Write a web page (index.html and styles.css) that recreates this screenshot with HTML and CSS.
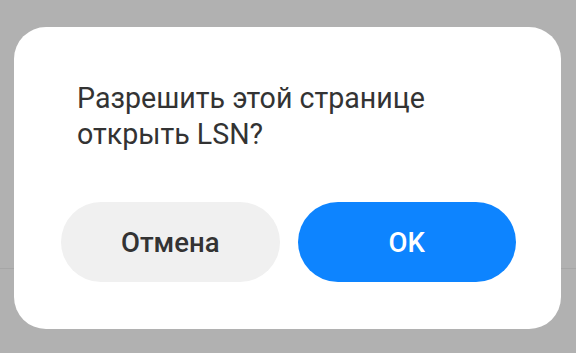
FILE: index.html
```html
<!DOCTYPE html>
<html lang="ru">
<head>
<meta charset="utf-8">
<link rel="stylesheet" href="styles.css">
</head>
<body>
<div class="dialog">
  <p class="message">Разрешить этой странице<br>открыть LSN?</p>
  <div class="actions">
    <button class="btn btn-cancel">Отмена</button>
    <button class="btn btn-ok">OK</button>
  </div>
</div>
</body>
</html>
```
FILE: styles.css
```css
html, body {
  margin: 0;
  padding: 0;
}
body {
  width: 576px;
  height: 353px;
  overflow: hidden;
  background: linear-gradient(to bottom, #b1b1b1 0, #b1b1b1 268px, #a6a6a6 268px, #a6a6a6 269px, #b1b1b1 269px);
  font-family: Roboto, "Noto Sans", sans-serif;
  padding-top: 27px;
  box-sizing: border-box;
}
.dialog {
  margin-left: 14px;
  width: 547px;
  height: 302px;
  box-sizing: border-box;
  background: #ffffff;
  border-radius: 32px;
  padding: 53px 45px 0 47px;
  display: flex;
  flex-direction: column;
}
.message {
  margin: 0 0 0 16px;
  font-size: 28.6px;
  line-height: 36px;
  color: #333333;
  font-weight: 400;
}
.actions {
  margin-top: 50px;
  display: flex;
  gap: 18px;
}
.btn {
  flex: 1;
  height: 80px;
  border: none;
  border-radius: 40px;
  font-family: Roboto, "Noto Sans", sans-serif;
  font-size: 27.5px;
  font-weight: 500;
  padding: 0;
}
.btn-cancel {
  background: #f0f0f0;
  color: #333333;
}
.btn-ok {
  background: #0d84ff;
  color: #ffffff;
}
```
